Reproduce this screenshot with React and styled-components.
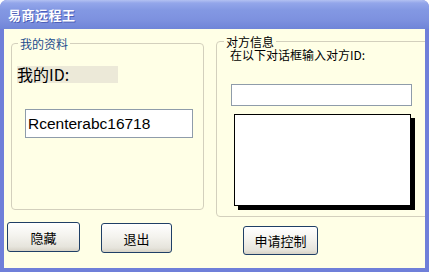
import styled, { createGlobalStyle } from 'styled-components';

const GlobalStyle = createGlobalStyle`
  html, body {
    margin: 0;
    padding: 0;
    background: #ffffff;
  }
  * {
    box-sizing: border-box;
  }
`;

const cjk = `"Noto Sans CJK SC", "Liberation Sans", sans-serif`;

const App = () => {
  return (
    <>
      <GlobalStyle />
      <Window>
        <TitleBar>易商远程王</TitleBar>
        <Client>
          <Column>
            <GroupBox $width={193} $height={173} $top={8} $left={7}>
              <Legend $color="#1b4c8c" $offset={1}>我的资料</Legend>
              <IdLabel>我的ID:</IdLabel>
              <TextBox $width={168} $height={29} $top={26} $left={8} value="Rcenterabc16718" readOnly />
            </GroupBox>
            <ButtonRow $top={12} $left={3}>
              <Button $width={73} $height={30}>隐藏</Button>
              <Button $width={71} $height={30} $shift={1}>退出</Button>
            </ButtonRow>
          </Column>
          <Column>
            <GroupBox $width={220} $height={182} $top={6} $left={0} $pad={14}>
              <Legend $color="#000000" $offset={-7}>对方信息</Legend>
              <Hint>在以下对话框输入对方ID:</Hint>
              <TextBox $width={181} $height={22} $top={23} $left={0} readOnly />
              <ShadowBox />
            </GroupBox>
            <ButtonRow $top={9} $left={27}>
              <Button $width={75} $height={29}>申请控制</Button>
            </ButtonRow>
          </Column>
        </Client>
      </Window>
    </>
  );
};

const Window = styled.div`
  width: 429px;
  height: 272px;
  display: flex;
  flex-direction: column;
  background: #6f7fd9;
  border-radius: 7px 7px 0 0;
  overflow: hidden;
`;

const TitleBar = styled.div`
  height: 29px;
  flex-shrink: 0;
  display: flex;
  align-items: center;
  padding-left: 8px;
  padding-bottom: 1px;
  background: linear-gradient(
    to bottom,
    #b3c1f2 0px,
    #93a6ea 3px,
    #8398e3 10px,
    #7d91df 20px,
    #7085d8 29px
  );
  color: #ffffff;
  font-family: ${cjk};
  font-weight: 700;
  font-size: 13px;
  letter-spacing: 0.5px;
  text-shadow: 1px 1px 0 #4c5fb8;
`;

const Client = styled.div`
  flex: 1;
  margin: 0 4px 4px 4px;
  background: #ffffe6;
  display: grid;
  grid-template-columns: 212px 1fr;
  overflow: hidden;
`;

const Column = styled.div`
  display: flex;
  flex-direction: column;
  align-items: flex-start;
`;

const GroupBox = styled.fieldset`
  width: ${p => p.$width}px;
  height: ${p => p.$height}px;
  margin: ${p => p.$top}px 0 0 ${p => p.$left}px;
  padding: 0 0 0 ${p => p.$pad || 5}px;
  border: 1px solid #d3d0bd;
  border-radius: 4px;
  display: flex;
  flex-direction: column;
  align-items: flex-start;
  min-width: 0;
`;

const Legend = styled.legend`
  margin-left: ${p => p.$offset}px;
  padding: 0 2px;
  font-family: ${cjk};
  font-size: 12px;
  line-height: 13px;
  color: ${p => p.$color};
`;

const IdLabel = styled.div`
  width: 101px;
  height: 17px;
  margin-top: 16px;
  background: #ece9d8;
  font-family: ${cjk};
  font-size: 16px;
  line-height: 17px;
  color: #000000;
  white-space: nowrap;
`;

const TextBox = styled.input`
  width: ${p => p.$width}px;
  height: ${p => p.$height}px;
  margin: ${p => p.$top}px 0 0 ${p => p.$left}px;
  padding: 0 0 0 2px;
  border: 1px solid #8f9caa;
  background: #ffffff;
  font-family: "Liberation Sans", Arial, sans-serif;
  font-size: 15.5px;
  color: #000000;
  outline: none;
`;

const Hint = styled.div`
  margin: 0 0 0 -1px;
  font-family: ${cjk};
  font-size: 12px;
  line-height: 13px;
  color: #000000;
  white-space: nowrap;
`;

const ShadowBox = styled.div`
  width: 177px;
  height: 92px;
  margin: 8px 0 0 3px;
  background: #ffffff;
  border: 1px solid #000000;
  box-shadow: 4px 4px 0 #000000;
`;

const ButtonRow = styled.div`
  display: flex;
  align-items: flex-start;
  gap: 21px;
  margin: ${p => p.$top}px 0 0 ${p => p.$left}px;
`;

const Button = styled.button`
  width: ${p => p.$width}px;
  height: ${p => p.$height}px;
  margin-top: ${p => p.$shift || 0}px;
  padding: 0;
  border: 1px solid #1f3f66;
  border-radius: 3px;
  background: linear-gradient(to bottom, #ffffff 0%, #f4f3ee 45%, #e6e4dc 85%, #d6d2c6 100%);
  font-family: ${cjk};
  font-size: 13px;
  color: #000000;
  cursor: pointer;
`;

export default App;
